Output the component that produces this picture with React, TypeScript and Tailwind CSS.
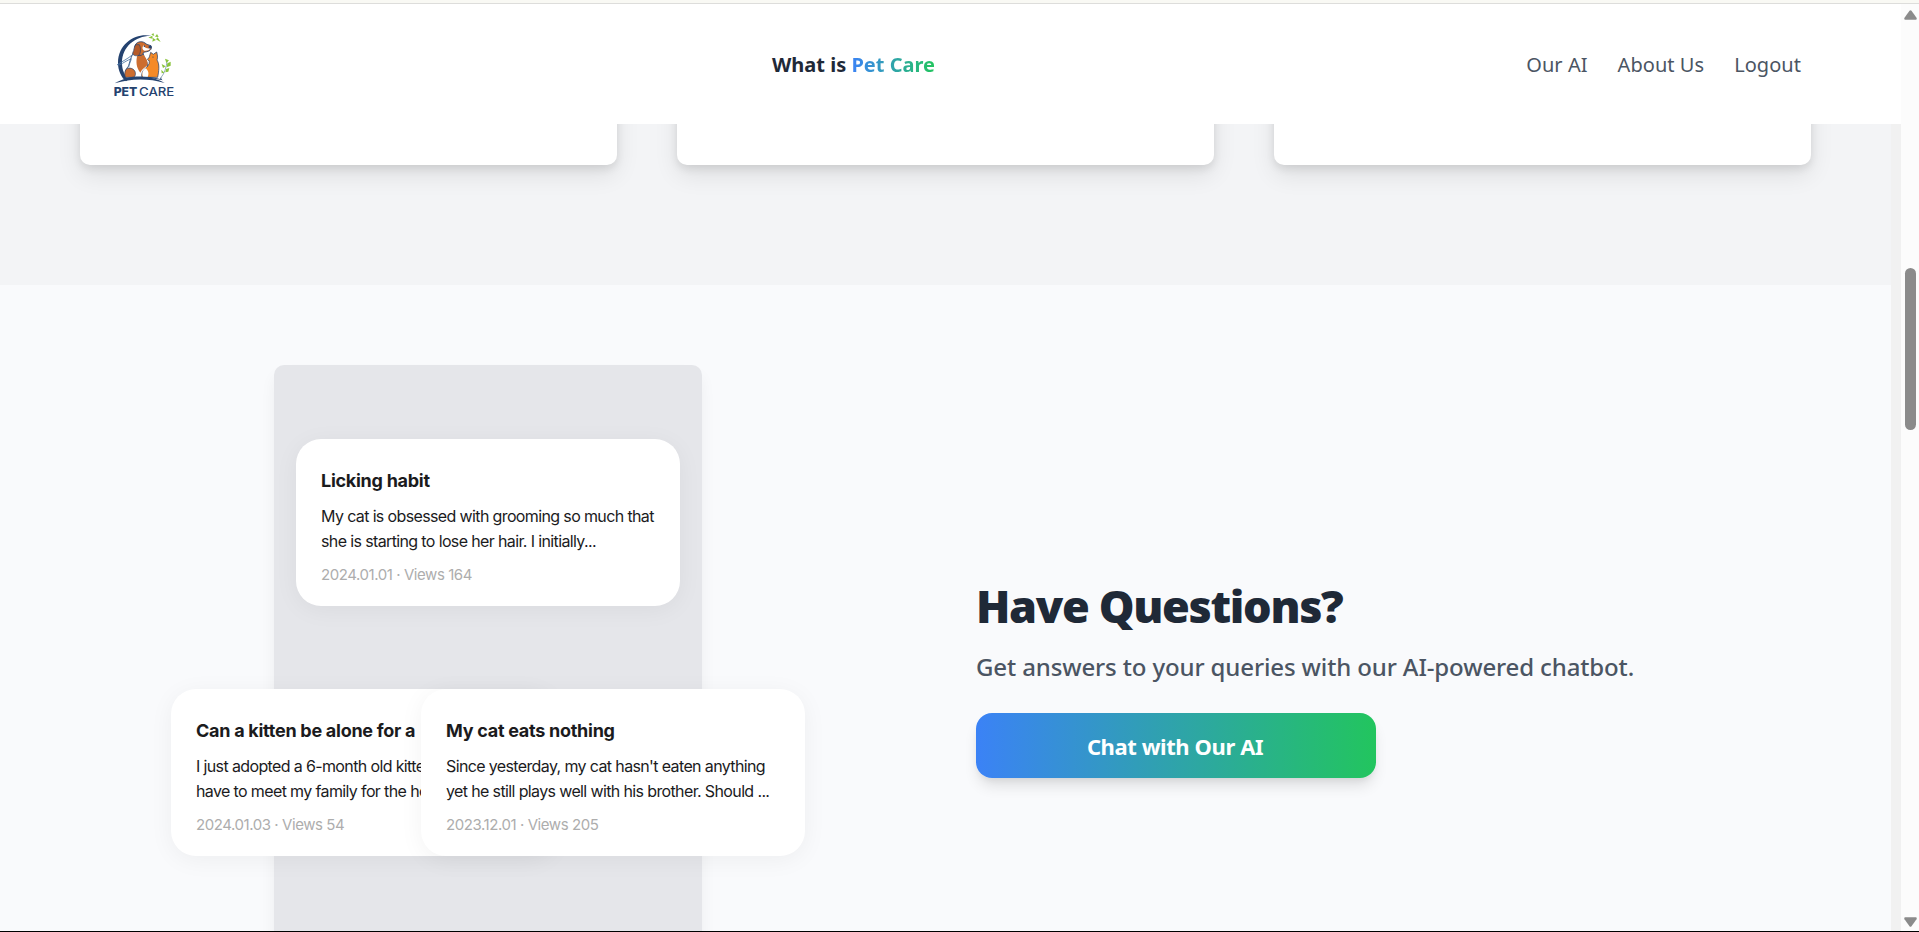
import React from "react";

type Question = { title: string; lines: [string, string]; meta: string };

const licking: Question = {
  title: "Licking habit",
  lines: ["My cat is obsessed with grooming so much that", "she is starting to lose her hair. I initially..."],
  meta: "2024.01.01 · Views 164",
};
const kitten: Question = {
  title: "Can a kitten be alone for a",
  lines: ["I just adopted a 6-month old kitte", "have to meet my family for the ho"],
  meta: "2024.01.03 · Views 54",
};
const eating: Question = {
  title: "My cat eats nothing",
  lines: ["Since yesterday, my cat hasn't eaten anything", "yet he still plays well with his brother. Should ..."],
  meta: "2023.12.01 · Views 205",
};

function QuestionCard({ item, className, textWidth }: { item: Question; className: string; textWidth: string }) {
  return (
    <article
      className={
        "h-[167px] w-[384px] shrink-0 rounded-[25px] bg-white pt-[29px] pl-[25px] font-['Inter',sans-serif] whitespace-nowrap text-[#1b1b1d] shadow-[0_4px_24px_rgba(0,0,0,0.05)] " +
        className
      }
    >
      <div className={"overflow-hidden " + textWidth}>
        <h3 className="text-[18px] leading-[26px] font-bold tracking-[-0.27px]">{item.title}</h3>
        <p className="mt-[10px] text-[16px] leading-[25px] tracking-[-0.63px]">
          {item.lines[0]}
          <br />
          {item.lines[1]}
        </p>
        <p className="mt-[11px] text-[15px] leading-[20px] tracking-[-0.43px] text-[#adadad]">{item.meta}</p>
      </div>
    </article>
  );
}

function Logo() {
  return (
    <svg viewBox="0 0 330 270" className="h-[90px] w-[110px]">
      <path d="M184 48C142 37 84 68 84 128c0 24 10 44 24 56l8-6c-12-12-20-28-20-50 0-50 44-82 88-80z" fill="#24426f" />
      <path d="M74 190c44-26 108-26 150-1-48-14-100-14-150 1z" fill="#24426f" />
      <path d="M132 96c-8 12-12 24-16 42-8 8-12 18-8 36h56c6-10 10-28 8-44-4-12-10-18-12-28z" fill="#fff" stroke="#24426f" strokeWidth="2.5" />
      <path d="M142 106l18-2c8 10 15 20 12 32-8 7-16 12-21 22-12-14-14-34-9-52z" fill="#cc6d30" />
      <path d="M108 148c10-8 26-2 28 10 1 7-1 10-4 14h-26c-3-9-2-17 2-24z" fill="#cc6d30" stroke="#24426f" strokeWidth="2" />
      <path d="M134 80c2-14 20-19 31-11 5 5 12 6 18 8 3 4 1 11-3 14-6 5-14 4-19 6-1 8-10 11-17 9z" fill="#cc6d30" stroke="#24426f" strokeWidth="2.5" />
      <path d="M161 76c3 8 10 10 20 9-4 7-12 8-18 7-7-3-7-11-2-16z" fill="#fff" />
      <path d="M139 74c-9 6-5 15-11 25-1 8 15 12 21 4 4-9 3-22-1-29z" fill="#b55a29" stroke="#24426f" strokeWidth="2" />
      <path d="M173 117c6-4 6-11 9-20l8 6 10-7c2 9 4 15 1 24 9 14 5 35 2 52h-47c-3-10 2-20 9-26 8-7 14-12 13-24-3 0-6-2-5-5z" fill="#f58a27" stroke="#24426f" strokeWidth="2.2" />
      <path d="M167 145c-10 6-12 17-8 26h14c4-9 3-19-6-26z" fill="#fff" />
      <path d="M130 102c-18 16-34 22-48 32 8 4 18-8 42-18-2 10-8 18-8 26" fill="none" stroke="#4a73a2" strokeWidth="2.5" />
      <circle cx="180" cy="81" r="4.5" fill="#24426f" />
      <circle cx="163" cy="79" r="2.2" fill="#24426f" />
      <circle cx="189" cy="111" r="1.8" fill="#24426f" />
      <path d="M110 174c26-6 64-6 100 3l4-7c-2 6 2 9 4 11-36-8-72-9-108-2z" fill="#24426f" />
      <path d="M212 174c12-14 17-32 20-54" fill="none" stroke="#5e829e" strokeWidth="2" />
      <g fill="#8ac43d">
        <path d="M175 53l12-6 1 9zM184 44l6-5 3 9zM187 65l2-11 9 6zM195 50l6-8 5 9zM198 58l5-6 9 14zM229 129l-4-13 12 5zM227 139l-12-7 4 12zM230 142l2-12 10-5 0 12zM223 158l-9-9 1 11zM226 157l2-10 10-3-3 11z" />
      </g>
      <g fill="#24426f" fontFamily="Inter, sans-serif" fontSize="35">
        <text x="71" y="229" fontWeight="800" textLength="71" lengthAdjust="spacingAndGlyphs">PET</text>
        <text x="147" y="229" fontWeight="500" textLength="106" lengthAdjust="spacingAndGlyphs">CARE</text>
      </g>
    </svg>
  );
}

function Scrollbar() {
  return (
    <aside className="flex w-[18px] shrink-0 flex-col items-center bg-[#fcfcfc] pt-[6px] pb-[4px]">
      <svg viewBox="0 0 13 10" className="h-[10px] w-[13px]">
        <path d="M5.5 .7q1-1 2 0l5 7q.8 2-.8 2H1.3q-1.6 0-.8-2z" fill="#8b8b8b" />
      </svg>
      <div className="mt-[248px] h-[162px] w-[11px] rounded-full bg-[#8b8b8b]" />
      <svg viewBox="0 0 13 10" className="mt-auto h-[10px] w-[13px]">
        <path d="M5.5 9.3q1 1 2 0l5-7q.8-2-.8-2H1.3q-1.6 0-.8 2z" fill="#8b8b8b" />
      </svg>
    </aside>
  );
}

export default function App() {
  return (
    <div className="flex h-[932px] w-[1919px] flex-col overflow-hidden bg-white font-['Noto_Sans',sans-serif]">
      <div className="h-1 shrink-0 border-b border-[#dddddb] bg-[#f9f9f4]" />
      <div className="flex min-h-0 flex-1">
        <div className="flex min-w-0 flex-1 flex-col">
          <header className="z-10 flex h-[120px] shrink-0 items-start bg-white pr-[100px] pl-[90px]">
            <div className="mt-4 w-[220px]">
              <Logo />
            </div>
            <h1 className="mt-[47px] ml-[462px] text-[20px] leading-7 font-bold whitespace-nowrap text-[#1f2937]">
              What is{" "}
              <span className="bg-linear-to-r/srgb from-[#3b82f6] to-[#22c55e] bg-clip-text text-transparent">Pet Care</span>
            </h1>
            <nav className="mt-[47px] ml-auto flex gap-[30px] text-[20px] leading-7 tracking-[0.05px] whitespace-nowrap text-[#4b5563]">
              <a>Our AI</a>
              <a>About Us</a>
              <a>Logout</a>
            </nav>
          </header>
          <div className="flex min-h-0 flex-1 bg-[#f1f1f1] pr-[10px]">
            <main className="flex min-w-0 flex-1 flex-col">
              <section className="grid h-[161px] shrink-0 grid-cols-3 gap-[60px] overflow-hidden bg-[#f3f4f6] px-20">
                {[0, 1, 2].map((n) => (
                  <div
                    key={n}
                    className="-mt-20 h-[121px] rounded-[10px] bg-white shadow-[0_10px_24px_rgba(0,0,0,0.09),0_4px_8px_rgba(0,0,0,0.09)]"
                  />
                ))}
              </section>
              <section className="flex min-h-0 flex-1 overflow-hidden bg-[#f9fafc]">
                <div className="w-[976px] shrink-0 pt-20 pl-[274px]">
                  <div className="flex h-[700px] w-[428px] flex-col rounded-[10px] bg-[#e5e6ea] pt-[74px] shadow-[0_10px_15px_rgba(0,0,0,0.05)]">
                    <QuestionCard item={licking} className="ml-[22px]" textWidth="w-[340px]" />
                    <div className="mt-[83px] -ml-[103px] flex">
                      <QuestionCard item={kitten} className="" textWidth="w-[225px]" />
                      <QuestionCard item={eating} className="-ml-[134px]" textWidth="w-[340px]" />
                    </div>
                  </div>
                </div>
                <div className="flex flex-col items-start pt-[297px] whitespace-nowrap">
                  <h2 className="text-[45px] leading-[48px] font-black tracking-[-1.35px] text-[#1f2937]">Have Questions?</h2>
                  <p className="mt-[21px] text-[24px] leading-8 font-medium tracking-[-0.13px] text-[#4b5563]">
                    Get answers to your queries with our AI-powered chatbot.
                  </p>
                  <button className="mt-[30px] h-[65px] w-[400px] rounded-2xl bg-linear-to-r/srgb from-[#3b82f6] to-[#22c55e] pr-[2px] text-[22px] leading-8 font-bold tracking-[-0.42px] text-white shadow-[0_10px_15px_-3px_rgba(0,0,0,0.12),0_4px_6px_-2px_rgba(0,0,0,0.06)]">
                    Chat with Our AI
                  </button>
                </div>
              </section>
            </main>
          </div>
        </div>
        <Scrollbar />
      </div>
      <div className="h-px shrink-0 bg-black" />
    </div>
  );
}
